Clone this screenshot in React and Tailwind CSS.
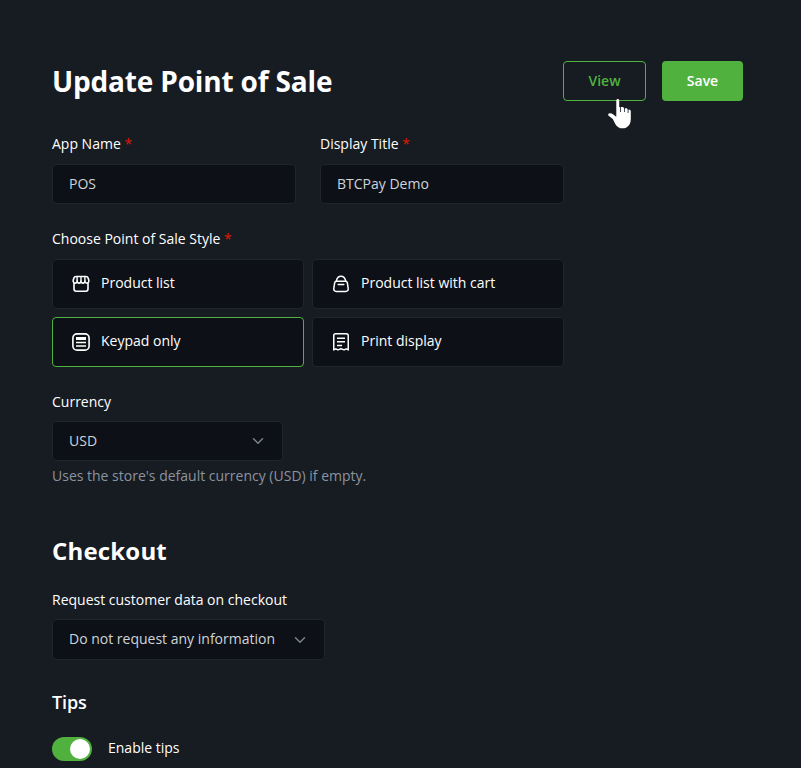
import React from 'react';

function StoreIcon() {
  return (
    <svg width="20" height="20" viewBox="0 0 20 20" fill="none" stroke="#fff" strokeWidth="1.6" strokeLinejoin="round">
      <path d="M5 2.500h10c1.100 0 1.800.5 2.100 1.500l.7 2.300c.2 1.800-.7 2.800-1.900 2.800-1.200 0-2-.8-2-2 0 1.200-.8 2-2 2s-1.900-.8-1.900-2c0 1.200-.8 2-1.900 2s-2-.8-2-2c0 1.200-.8 2-2 2S2 8.100 2.200 6.300L2.900 4c.3-1 1-1.500 2.100-1.500Z" />
      <path d="M6.100 7.100V2.500M10 7.100V2.500M13.900 7.100V2.500" strokeWidth="1.400" />
      <path d="M3 8.900V15c0 1.400.9 2.200 2.300 2.200h9.400c1.400 0 2.300-.8 2.300-2.200V8.900" />
    </svg>
  );
}

function BagIcon() {
  return (
    <svg width="20" height="20" viewBox="0 0 20 20" fill="none" stroke="#fff" strokeWidth="1.5" strokeLinecap="round" strokeLinejoin="round">
      <path d="M5.500 7.200h9c1 0 1.600.5 1.800 1.400l.9 5.700c.3 2-.7 3.100-2.500 3.100H5.300c-1.800 0-2.800-1.100-2.500-3.100l.9-5.700c.2-.9.800-1.400 1.800-1.400Z" />
      <path d="M5.300 7C6 4 7.700 2.200 10 2.200S14 4 14.700 7M7.200 10.500h5.600" />
    </svg>
  );
}

function KeypadIcon() {
  return (
    <svg width="20" height="20" viewBox="0 0 20 20" fill="none" stroke="#fff">
      <rect x="1.900" y="1.900" width="16.200" height="16.200" rx="4.200" strokeWidth="1.600" />
      <path d="M5 6.500h10" strokeWidth="3" />
      <path d="M5 10.500h10M5 14h10" strokeWidth="1.500" />
    </svg>
  );
}

function ReceiptIcon() {
  return (
    <svg width="20" height="20" viewBox="0 0 20 20" fill="none" stroke="#fff" strokeWidth="1.500" strokeLinejoin="round">
      <path d="M2.750 17.900V3.700c0-1.200.7-1.900 1.900-1.900h10.700c1.200 0 1.900.7 1.900 1.900v14.200l-2.100-1.100-2.100 1.100L10 16.800l-3.050 1.100-2.100-1.100-2.100 1.100Z" />
      <path d="M6 6.200h8M6 9.800h8M6 13.400h5" />
    </svg>
  );
}

function Chevron() {
  return (
    <svg width="12" height="8" viewBox="0 0 12 8" fill="none" stroke="#7b828c" strokeWidth="1.500" strokeLinecap="round" strokeLinejoin="round">
      <path d="M1.500 1.800 6 6.200l4.500-4.400" />
    </svg>
  );
}

function Pointer() {
  return (
    <svg className="absolute top-[36px] left-[43px]" width="25" height="32" viewBox="0 0 25 32" fill="#fff">
      <path d="M9.300 2.700c0-1 .6-1.600 1.400-1.600s1.500.6 1.500 1.600V9l.9.200V14h.8V9.100c1.600-.2 3.100.2 3.100 1.500V14h.8v-3.600c1.500-.2 2.900.2 2.900 1.500V15h.8v-3.400c1.400.1 2.300.6 2.300 1.700V21c0 5.700-3.200 9.300-8.200 9.300-3.300 0-5.500-1.400-7.300-4.400L5.800 21l-4.200-3.300c-.8-.7-.5-1.900.5-2.200 1.300-.4 2.800 0 4.200 1l3 2.200Z" />
    </svg>
  );
}

function Label({ children, required }) {
  return (
    <div className="h-[21px] leading-[21px] text-white">
      {children}
      {required && <span className="text-[#e11900]"> *</span>}
    </div>
  );
}

const cardStyle = 'flex h-[50px] items-center gap-[10px] rounded border bg-[#0d1117] pl-[18px] text-white';

function StyleCard({ icon, label, selected }) {
  return (
    <div className={`${cardStyle} ${selected ? 'border-[#51b13e]' : 'border-[#20252d]'}`}>
      {icon}
      <span className="-mt-[3px]">{label}</span>
    </div>
  );
}

function Field({ label, value }) {
  return (
    <div className="w-[244px]">
      <Label required>{label}</Label>
      <div className="mt-[10px] flex h-10 items-center rounded border border-[#20252d] bg-[#0d1117] pb-[2px] pl-4 text-[#ced4da]">{value}</div>
    </div>
  );
}

export default function App() {
  return (
    <div className="h-[768px] w-[801px] overflow-hidden bg-[#171b22] pt-[61px] pl-[52px] font-['Open_Sans',sans-serif] text-[14px] leading-[21px]">
      <header className="flex h-10 w-[691px] items-center justify-between">
        <h1 className="text-[28px] leading-[40px] font-bold tracking-[-0.17px] text-white">Update Point of Sale</h1>
        <div className="flex gap-4 font-semibold">
          <div className="relative flex h-10 w-[83px] items-center justify-center rounded border border-[#51b13e] pb-[2px] text-[#51b13e]">
            View
            <Pointer />
          </div>
          <div className="flex h-10 w-[81px] items-center justify-center rounded bg-[#51b13e] pb-[2px] text-white">Save</div>
        </div>
      </header>

      <div className="mt-8 flex gap-6">
        <Field label="App Name" value="POS" />
        <Field label="Display Title" value="BTCPay Demo" />
      </div>

      <section className="mt-6 w-[512px]">
        <Label required>Choose Point of Sale Style</Label>
        <div className="mt-[10px] grid grid-cols-2 gap-2">
          <StyleCard icon={<StoreIcon />} label="Product list" />
          <StyleCard icon={<BagIcon />} label="Product list with cart" />
          <StyleCard icon={<KeypadIcon />} label="Keypad only" selected />
          <StyleCard icon={<ReceiptIcon />} label="Print display" />
        </div>
      </section>

      <section className="mt-6">
        <Label>Currency</Label>
        <div className="mt-[9px] flex h-10 w-[231px] items-center justify-between rounded border border-[#20252d] bg-[#0d1117] pr-[18px] pl-4 text-[#ced4da]">
          <span className="-mt-[2px]">USD</span>
          <Chevron />
        </div>
        <p className="mt-1 text-[#8b949e]">Uses the store's default currency (USD) if empty.</p>
      </section>

      <section className="mt-[49px]">
        <h2 className="text-[24px] leading-8 font-bold tracking-[0.18px] text-white">Checkout</h2>
        <div className="mt-[22px]">
          <Label>Request customer data on checkout</Label>
        </div>
        <div className="mt-[9px] flex h-[41px] w-[273px] items-center justify-between rounded border border-[#20252d] bg-[#0d1117] pr-[18px] pl-4 text-[#ced4da]">
          <span className="-mt-[2px]">Do not request any information</span>
          <Chevron />
        </div>
      </section>

      <section className="mt-[29px]">
        <h3 className="text-[18px] leading-[26px] font-semibold tracking-[-0.1px] text-white">Tips</h3>
        <div className="mt-[22px] flex items-center gap-4 text-white">
          <div className="flex h-6 w-10 items-center justify-end rounded-full bg-[#51b13e] pr-[2px]">
            <div className="size-5 rounded-full bg-white" />
          </div>
          <span className="-mt-[3px]">Enable tips</span>
        </div>
      </section>
    </div>
  );
}
